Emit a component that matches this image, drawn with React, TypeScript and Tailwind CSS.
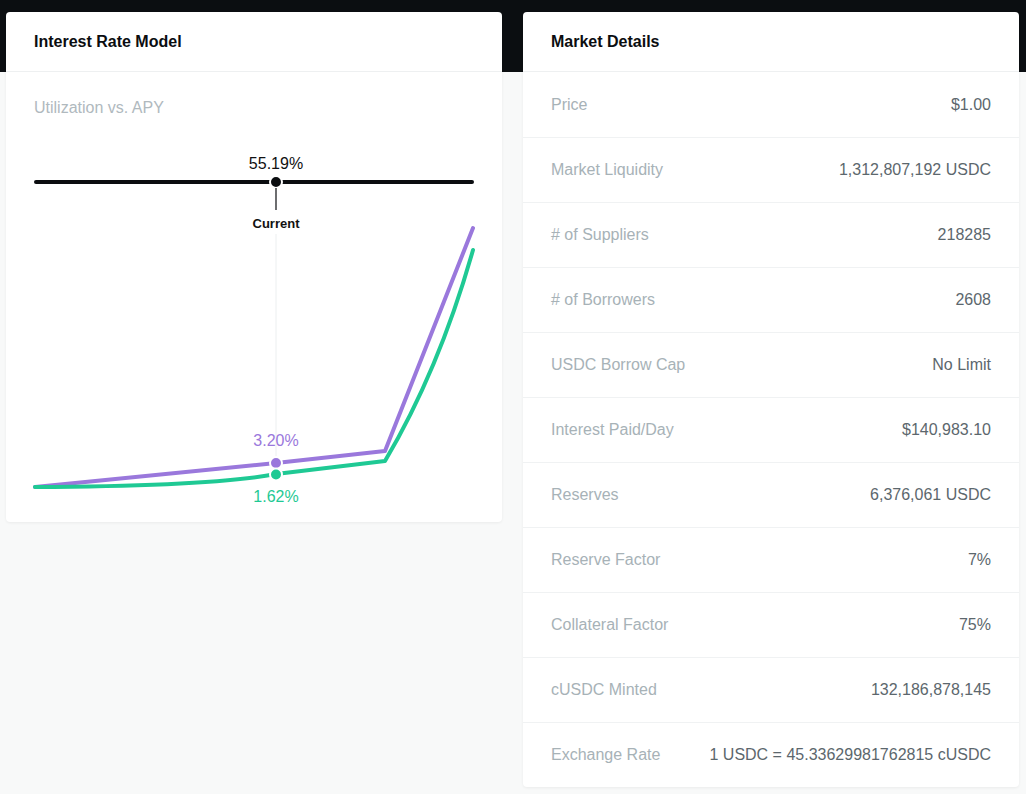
import React from 'react';

const details: [string, string][] = [
  ['Price', '$1.00'],
  ['Market Liquidity', '1,312,807,192 USDC'],
  ['# of Suppliers', '218285'],
  ['# of Borrowers', '2608'],
  ['USDC Borrow Cap', 'No Limit'],
  ['Interest Paid/Day', '$140,983.10'],
  ['Reserves', '6,376,061 USDC'],
  ['Reserve Factor', '7%'],
  ['Collateral Factor', '75%'],
  ['cUSDC Minted', '132,186,878,145'],
  ['Exchange Rate', '1 USDC = 45.33629981762815 cUSDC'],
];

function RateChart() {
  return (
    <svg width="440" height="380" viewBox="0 0 440 380" className="block overflow-visible">
      {/* utilization slider */}
      <text x="242" y="39" textAnchor="middle" fontSize="16" fill="#111">55.19%</text>
      <line x1="2" y1="52" x2="438" y2="52" stroke="#0b0d10" strokeWidth="4" strokeLinecap="round" />
      <circle cx="242" cy="52" r="6" fill="#0b0d10" stroke="#fff" strokeWidth="2" />
      <line x1="242" y1="58" x2="242" y2="80" stroke="#0b0d10" strokeWidth="1.2" />
      <text x="242" y="98" textAnchor="middle" fontSize="13" fontWeight="700" fill="#111">Current</text>
      <line x1="242" y1="104" x2="242" y2="326" stroke="#eceff0" strokeWidth="1" />

      {/* supply / borrow curves */}
      <path d="M1 357 L242 333 L351 321 L439 98" fill="none" stroke="#9a78dc" strokeWidth="4" strokeLinejoin="round" strokeLinecap="round" />
      <path d="M1 357 Q180 356 242 344 L351 331 Q405 240 439 120" fill="none" stroke="#1fc994" strokeWidth="4" strokeLinejoin="round" strokeLinecap="round" />
      <circle cx="242" cy="333" r="6" fill="#9a78dc" stroke="#fff" strokeWidth="2" />
      <circle cx="242" cy="344.5" r="6" fill="#1fc994" stroke="#fff" strokeWidth="2" />
      <text x="242" y="316" textAnchor="middle" fontSize="16" fill="#9a78dc">3.20%</text>
      <text x="242" y="372" textAnchor="middle" fontSize="16" fill="#1fc994">1.62%</text>
    </svg>
  );
}

export default function App() {
  return (
    <div className="min-h-[794px] bg-[#f8f9f9] font-['Liberation_Sans',Arial,sans-serif]">
      <div className="h-[72px] bg-[#0b0e11]" />
      <div className="-mt-[60px] flex items-start gap-[21px] px-[6px]">
        {/* Interest rate model */}
        <div className="w-[496px] rounded-[4px] bg-white shadow-[0_1px_3px_rgba(0,0,0,0.06)]">
          <div className="flex h-[60px] items-center border-b border-[#eef0f1] px-7">
            <h2 className="text-[16px] font-bold text-[#0b0d10]">Interest Rate Model</h2>
          </div>
          <div className="px-7 pt-[24px] pb-[12px]">
            <p className="text-[16px] leading-6 text-[#b0b9be]">Utilization vs. APY</p>
            <div className="mt-[10px]">
              <RateChart />
            </div>
          </div>
        </div>

        {/* Market details */}
        <div className="w-[496px] rounded-[4px] bg-white shadow-[0_1px_3px_rgba(0,0,0,0.06)]">
          <div className="flex h-[60px] items-center border-b border-[#eef0f1] px-7">
            <h2 className="text-[16px] font-bold text-[#0b0d10]">Market Details</h2>
          </div>
          {details.map(([label, value], i) => (
            <div
              key={label}
              className={`flex h-[65px] items-center justify-between px-7 text-[16px] ${i > 0 ? 'border-t border-[#f0f2f3]' : ''}`}
            >
              <span className="text-[#a7b2b7]">{label}</span>
              <span className="text-[#5c676d]">{value}</span>
            </div>
          ))}
        </div>
      </div>
    </div>
  );
}
